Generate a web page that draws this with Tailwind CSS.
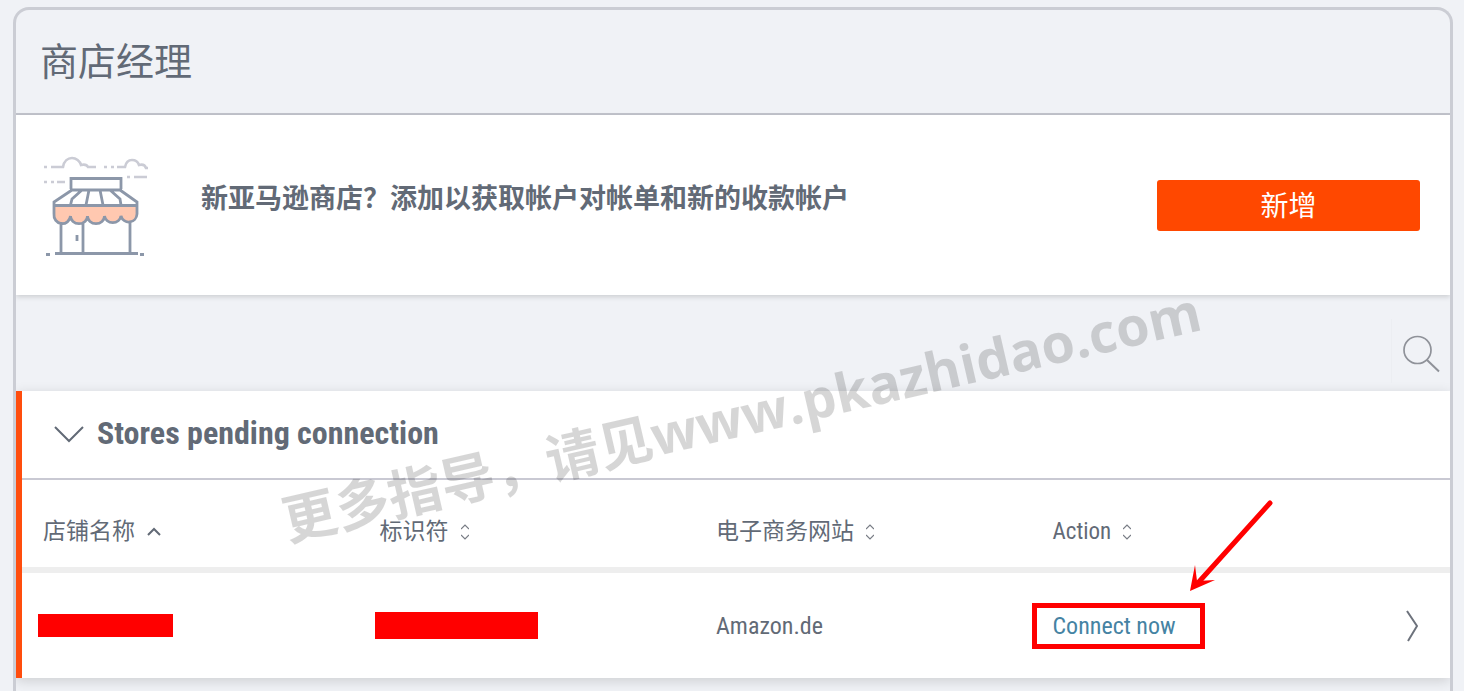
<!DOCTYPE html>
<html lang="zh-CN">
<head>
    <meta charset="UTF-8">
    <meta name="viewport" content="width=device-width, initial-scale=1.0">
    <title>商店经理</title>
    <script src="https://cdn.jsdelivr.net/npm/@tailwindcss/browser@4"></script>
</head>
<body class="relative flex min-h-screen flex-col overflow-x-hidden bg-[#f0f2f6] pt-[7px] pr-[11px] pl-[13px] font-['Roboto_Condensed','Liberation_Sans_Narrow',Roboto,'Noto_Sans_CJK_SC',sans-serif] text-[#626a76]">
    <main class="flex-1 overflow-hidden rounded-t-2xl border-3 border-b-0 border-[#cbcdd4]">
        <header class="border-b-2 border-[#c2c4cc] px-6 pt-6 pb-[23px]">
            <h1 class="text-[38px] leading-14">商店经理</h1>
        </header>

        <!-- Banner -->
        <section class="flex h-[180px] items-center bg-white pr-[30px] pl-6 shadow-[0_2px_5px_rgba(0,0,0,0.15)]">
            <svg class="h-[110px] w-[112px] shrink-0" viewBox="0 0 112 110" fill="none" aria-hidden="true">
                <g stroke="#cbccd5" stroke-width="2.6">
                    <path d="M4 17h3M11 17h12C24 11 28 8 32 8s8 3 9 7c4-1 6 0 7 2h8M64 17h3M71 17h3M77 17h8C86 12 89 10 92 10s6 2 7 5c4-1 6 0 7 3h2M87 27h3M94 27h13M4 32h3M11 32h3M17 32h8" />
                </g>
                <path d="M14 55h83v9a8.200 8.600 0 0 1-16 2a8.300 7.500 0 0 1-16.500 0a8.300 7.500 0 0 1-17 0a8.300 7.500 0 0 1-17 0a8.200 8.600 0 0 1-16.500-2z" fill="#ffc8b0" />
                <g stroke="#8c97a9" stroke-width="2.800">
                    <path d="M31 39V28.500h50V39M30 40h52M32 40L14 52v12a8.200 8.600 0 0 0 16.500 2a8.300 7.500 0 0 0 17 0a8.300 7.500 0 0 0 17 0a8.300 7.500 0 0 0 16.500 0a8.200 8.600 0 0 0 16-2V52L80 40M14 55.500h83M42 40l-10 9-1.500 6M49 40l-3 15M60 40l3 15M70 40l10 9 1 6M21 72v31M43 72v31M90 72v31M15 103.500h83M6 104.500h4M100 104.500h4" />
                    <path d="M37 85v6" />
                </g>
            </svg>
            <h2 class="ml-[49px] flex-1 pb-3 text-[27px] leading-10 font-bold">新亚马逊商店？添加以获取帐户对帐单和新的收款帐户</h2>
            <button type="button" class="h-[51px] w-[263px] rounded-[3px] bg-[#ff4800] pt-1 text-[28px] leading-10 text-white">新增</button>
        </section>

        <div class="flex h-24 items-end justify-end pb-2">
            <button type="button" aria-label="搜索" class="flex h-16 w-[59px] items-center justify-center border-l border-[#eceef2] pt-1.5">
                <svg class="size-10" viewBox="0 0 40 40" fill="none" stroke="#8f9299" stroke-width="1.7" aria-hidden="true">
                    <circle cx="16.500" cy="16" r="13.5" />
                    <path d="M26 26l12 11.500" stroke-width="2" />
                </svg>
            </button>
        </div>

        <!-- Pending stores -->
        <section class="border-l-6 border-[#ff4d0d] bg-white shadow-[0_3px_12px_rgba(0,0,0,0.15)]">
            <div class="flex h-[89px] items-center border-b-2 border-[#c9c9d3] pl-8">
                <button type="button" aria-label="折叠">
                    <svg class="h-5 w-[30px]" viewBox="0 0 30 20" fill="none" stroke="#626a76" stroke-width="2" aria-hidden="true">
                        <path d="M1 2l14 14L29 2" />
                    </svg>
                </button>
                <h2 class="ml-[13px] pb-1 text-[32px] leading-10 font-bold">Stores pending connection</h2>
            </div>
            <table class="w-full table-fixed border-collapse text-left text-[23px] leading-9">
                <thead>
                    <tr class="h-[90px] border-b-6 border-[#eeeeee]">
                        <th class="pt-4 pl-[21px] font-normal">
                            <button type="button" class="flex items-center gap-3">店铺名称
                                <svg class="h-3 w-3.5" viewBox="0 0 14 12" fill="none" stroke="#626a76" stroke-width="2" aria-hidden="true"><path d="M1 9l6-6 6 6" /></svg>
                            </button>
                        </th>
                        <th class="pt-4 pl-[21px] font-normal">
                            <button type="button" class="flex items-center gap-3">标识符
                                <svg class="h-4 w-2" viewBox="0 0 8 16" fill="none" stroke="#777b84" stroke-width="1.200" aria-hidden="true"><path d="M0 5l4-4 4 4M0 11l4 4 4-4" /></svg>
                            </button>
                        </th>
                        <th class="pt-4 pl-[21px] font-normal">
                            <button type="button" class="flex items-center gap-3">电子商务网站
                                <svg class="h-4 w-2" viewBox="0 0 8 16" fill="none" stroke="#777b84" stroke-width="1.200" aria-hidden="true"><path d="M0 5l4-4 4 4M0 11l4 4 4-4" /></svg>
                            </button>
                        </th>
                        <th class="pt-4 pl-[21px] font-normal">
                            <button type="button" class="flex items-center gap-3">Action
                                <svg class="h-4 w-2" viewBox="0 0 8 16" fill="none" stroke="#777b84" stroke-width="1.200" aria-hidden="true"><path d="M0 5l4-4 4 4M0 11l4 4 4-4" /></svg>
                            </button>
                        </th>
                        <th class="w-[82px]"></th>
                    </tr>
                </thead>
                <tbody class="text-2xl/9">
                    <tr class="h-[108px]">
                        <td class="pl-4"><div class="h-[23px] w-[135px] bg-[#ff0000]"></div></td>
                        <td class="pl-4"><div class="h-[27px] w-[163px] bg-[#ff0000]"></div></td>
                        <td class="pl-[21px]">Amazon.de</td>
                        <td>
                            <a href="#" class="relative block w-[173px] border-5 border-[#ff0000] pl-4 text-[#4583a3]">Connect now
                                <svg class="absolute bottom-[50px] left-[150px] h-24 w-[88px]" viewBox="0 0 88 96" aria-hidden="true">
                                    <path d="M83 5L10 86" stroke="#ff0000" stroke-width="5" stroke-linecap="round" />
                                    <path d="M3 93L8 67l2 16 18-1z" fill="#ff0000" />
                                </svg>
                            </a>
                        </td>
                        <td>
                            <button type="button" aria-label="详情" class="ml-[38px] block">
                                <svg class="h-8 w-3" viewBox="0 0 12 32" fill="none" stroke="#6d727c" stroke-width="2" aria-hidden="true"><path d="M1 1l10 15L2 31" /></svg>
                            </button>
                        </td>
                    </tr>
                </tbody>
            </table>
        </section>
    </main>

    <!-- Watermark -->
    <div class="pointer-events-none absolute top-[375px] left-[271px] -rotate-13 font-['Open_Sans','Noto_Sans_CJK_SC',sans-serif] text-[54px] leading-20 font-bold whitespace-nowrap text-black/16">更多指导，请见www.pkazhidao.com</div>
</body>
</html>
